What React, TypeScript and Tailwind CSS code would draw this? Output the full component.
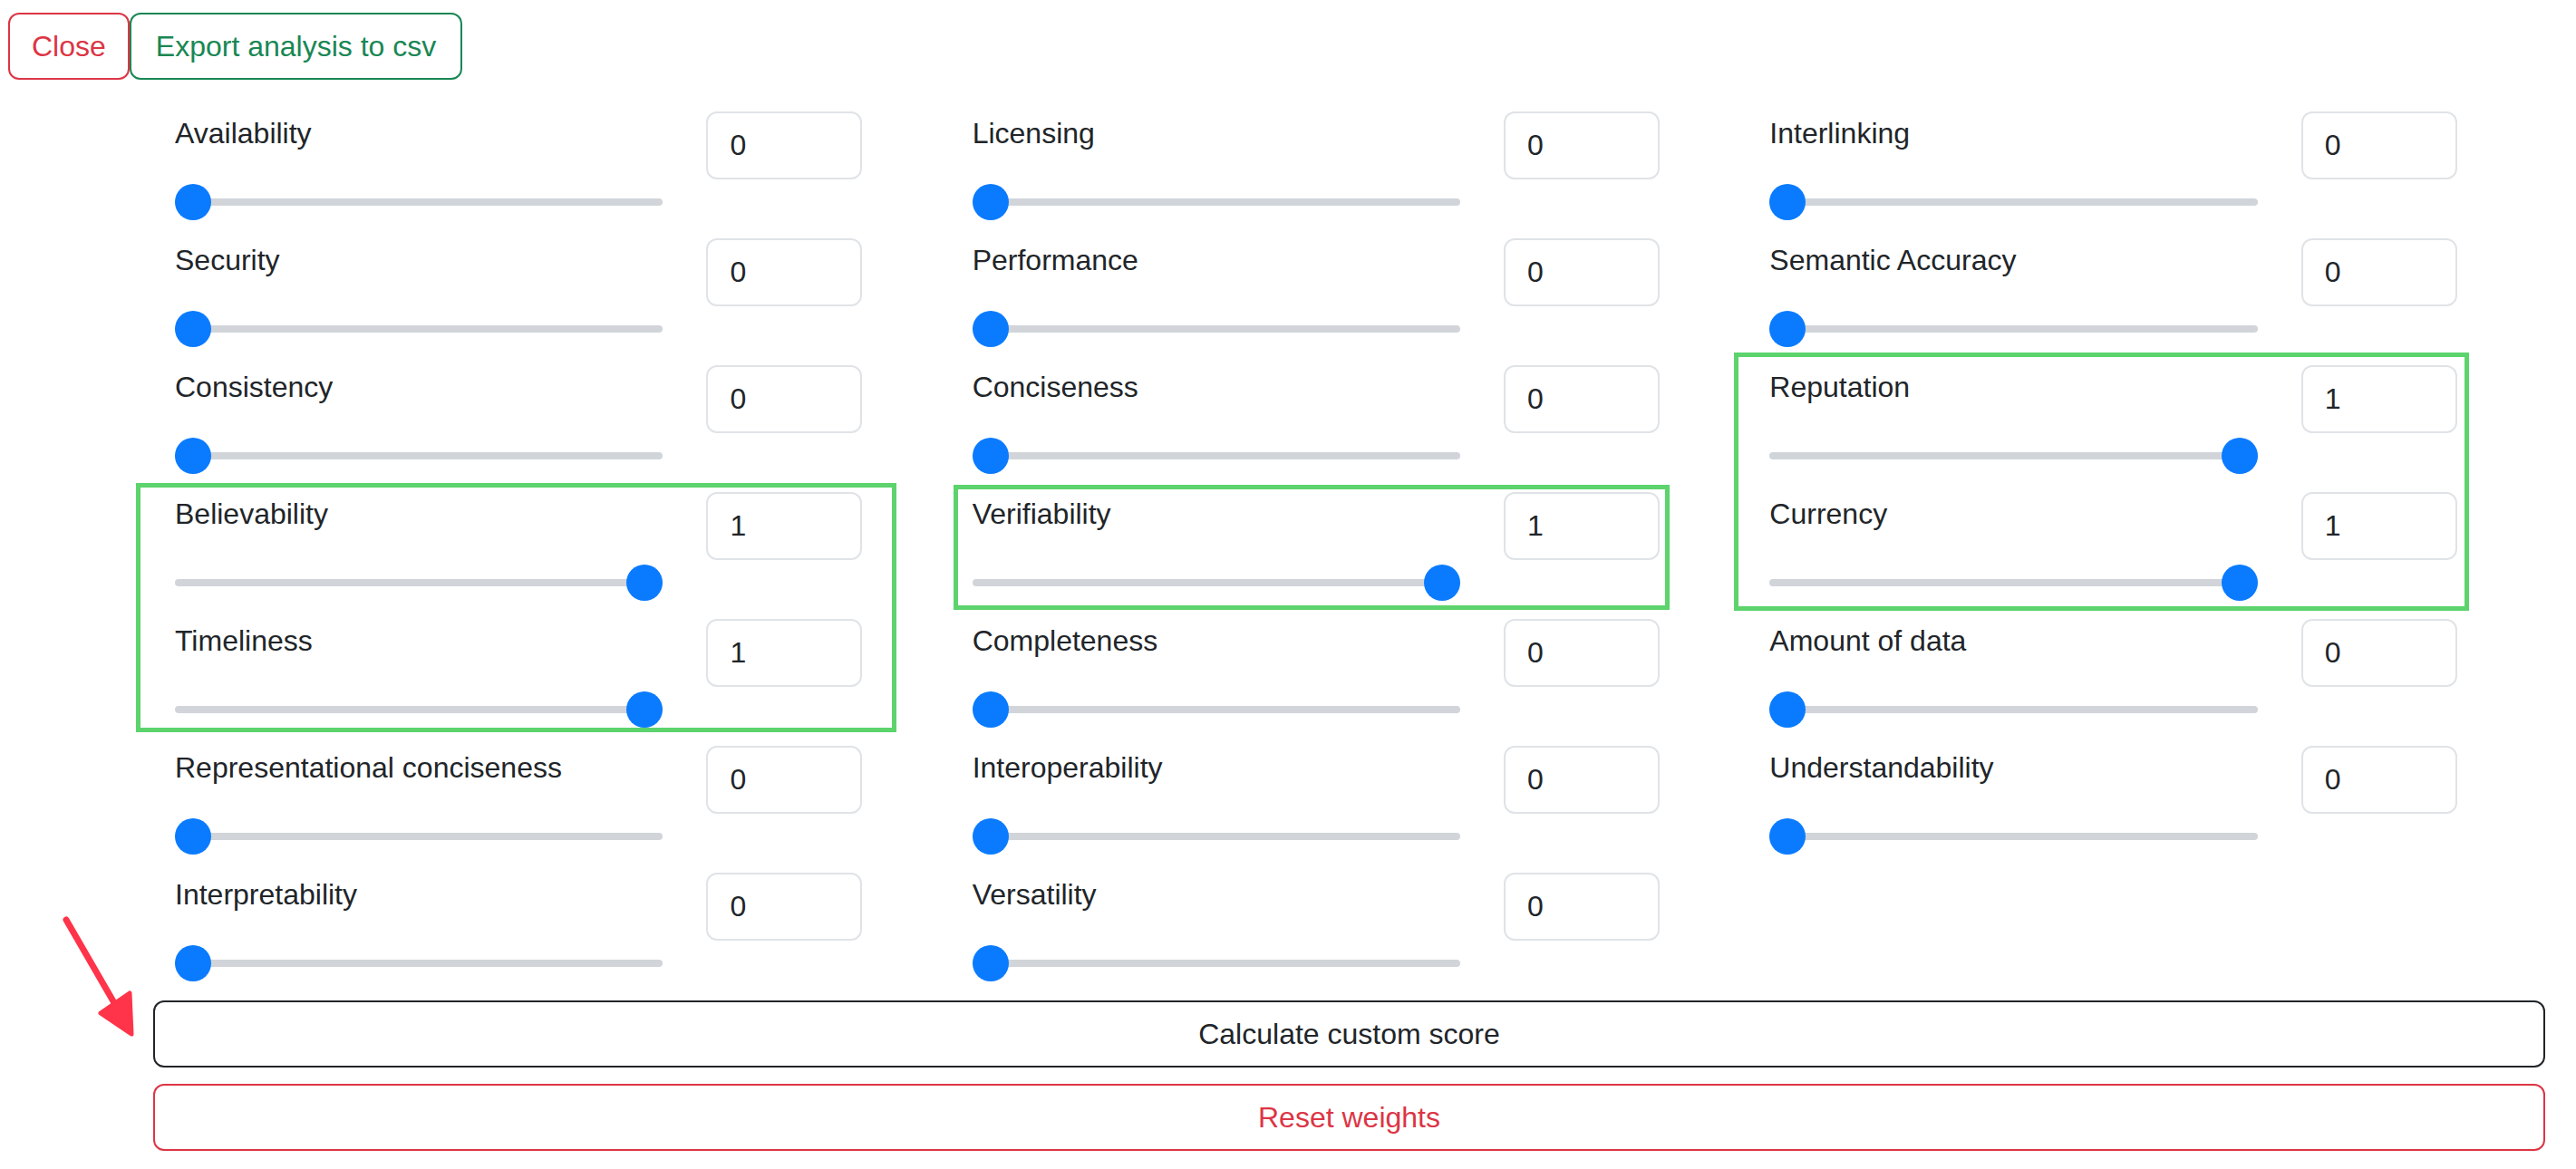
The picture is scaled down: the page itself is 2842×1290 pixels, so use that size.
import clsx from 'clsx';

type Weight = { label: string; value: number };

// row-major order, three per row
const weights: Weight[] = [
  { label: 'Availability', value: 0 },
  { label: 'Licensing', value: 0 },
  { label: 'Interlinking', value: 0 },
  { label: 'Security', value: 0 },
  { label: 'Performance', value: 0 },
  { label: 'Semantic Accuracy', value: 0 },
  { label: 'Consistency', value: 0 },
  { label: 'Conciseness', value: 0 },
  { label: 'Reputation', value: 1 },
  { label: 'Believability', value: 1 },
  { label: 'Verifiability', value: 1 },
  { label: 'Currency', value: 1 },
  { label: 'Timeliness', value: 1 },
  { label: 'Completeness', value: 0 },
  { label: 'Amount of data', value: 0 },
  { label: 'Representational conciseness', value: 0 },
  { label: 'Interoperability', value: 0 },
  { label: 'Understandability', value: 0 },
  { label: 'Interpretability', value: 0 },
  { label: 'Versatility', value: 0 },
];

function RangeSlider({ value }: { value: number }) {
  return (
    <div className={clsx('relative mt-8 flex h-10 items-center', value ? 'justify-end' : 'justify-start')}>
      <div className="absolute inset-x-0 top-4 h-2 rounded-full bg-[#d1d5da]" />
      <div className="relative h-10 w-10 rounded-full bg-[#0a7bff]" />
    </div>
  );
}

function WeightField({ label, value }: Weight) {
  return (
    <div className="flex h-[140px]">
      <div className="w-2/3 px-6">
        <div className="text-[32px] leading-[48px] text-[#212529]">{label}</div>
        <RangeSlider value={value} />
      </div>
      <div className="w-1/4 px-6">
        <input
          readOnly
          type="text"
          value={value}
          className="h-[75px] w-full rounded-xl border-2 border-[#e0e3e7] bg-white px-6 text-[32px] text-[#212529] outline-none"
        />
      </div>
    </div>
  );
}

// hand-drawn annotations that sit on top of the screenshot
function Annotations() {
  return (
    <>
      <div className="pointer-events-none absolute left-[150px] top-[533px] h-[275px] w-[839px] border-[5px] border-[#5cd36c]" />
      <div className="pointer-events-none absolute left-[1052px] top-[535px] h-[138px] w-[790px] border-[5px] border-[#5cd36c]" />
      <div className="pointer-events-none absolute left-[1913px] top-[389px] h-[285px] w-[811px] border-[5px] border-[#5cd36c]" />
      <svg className="pointer-events-none absolute left-[40px] top-[990px]" width="160" height="180" viewBox="0 0 160 180">
        <line x1="33" y1="25" x2="96" y2="134" stroke="#ff3349" strokeWidth="7" strokeLinecap="round" />
        <polygon
          points="71,128 103,106 105,151"
          fill="#ff3349"
          stroke="#ff3349"
          strokeWidth="5"
          strokeLinejoin="round"
        />
      </svg>
    </>
  );
}

export default function App() {
  return (
    <div className="relative min-h-[1290px] bg-white font-['Liberation_Sans',Arial,sans-serif] text-[#212529]">
      <div className="flex pl-[9px] pt-[14px]">
        <button className="rounded-xl border-2 border-[#dc3545] px-6 py-[11px] text-[32px] leading-[48px] text-[#dc3545]">
          Close
        </button>
        <button className="rounded-xl border-2 border-[#198754] px-[27px] py-[11px] text-[32px] leading-[48px] text-[#198754]">
          Export analysis to csv
        </button>
      </div>

      <div className="mt-[35px] pl-[169px] pr-[34px]">
        <div className="grid grid-cols-3">
          {weights.map((w) => (
            <WeightField key={w.label} {...w} />
          ))}
        </div>

        <button className="mt-px block w-full rounded-xl border-2 border-[#212529] py-[11px] text-center text-[32px] leading-[48px] text-[#212529]">
          Calculate custom score
        </button>
        <button className="mt-[18px] block w-full rounded-xl border-2 border-[#dc3545] py-[11px] text-center text-[32px] leading-[48px] text-[#dc3545]">
          Reset weights
        </button>
      </div>

      <Annotations />
    </div>
  );
}
